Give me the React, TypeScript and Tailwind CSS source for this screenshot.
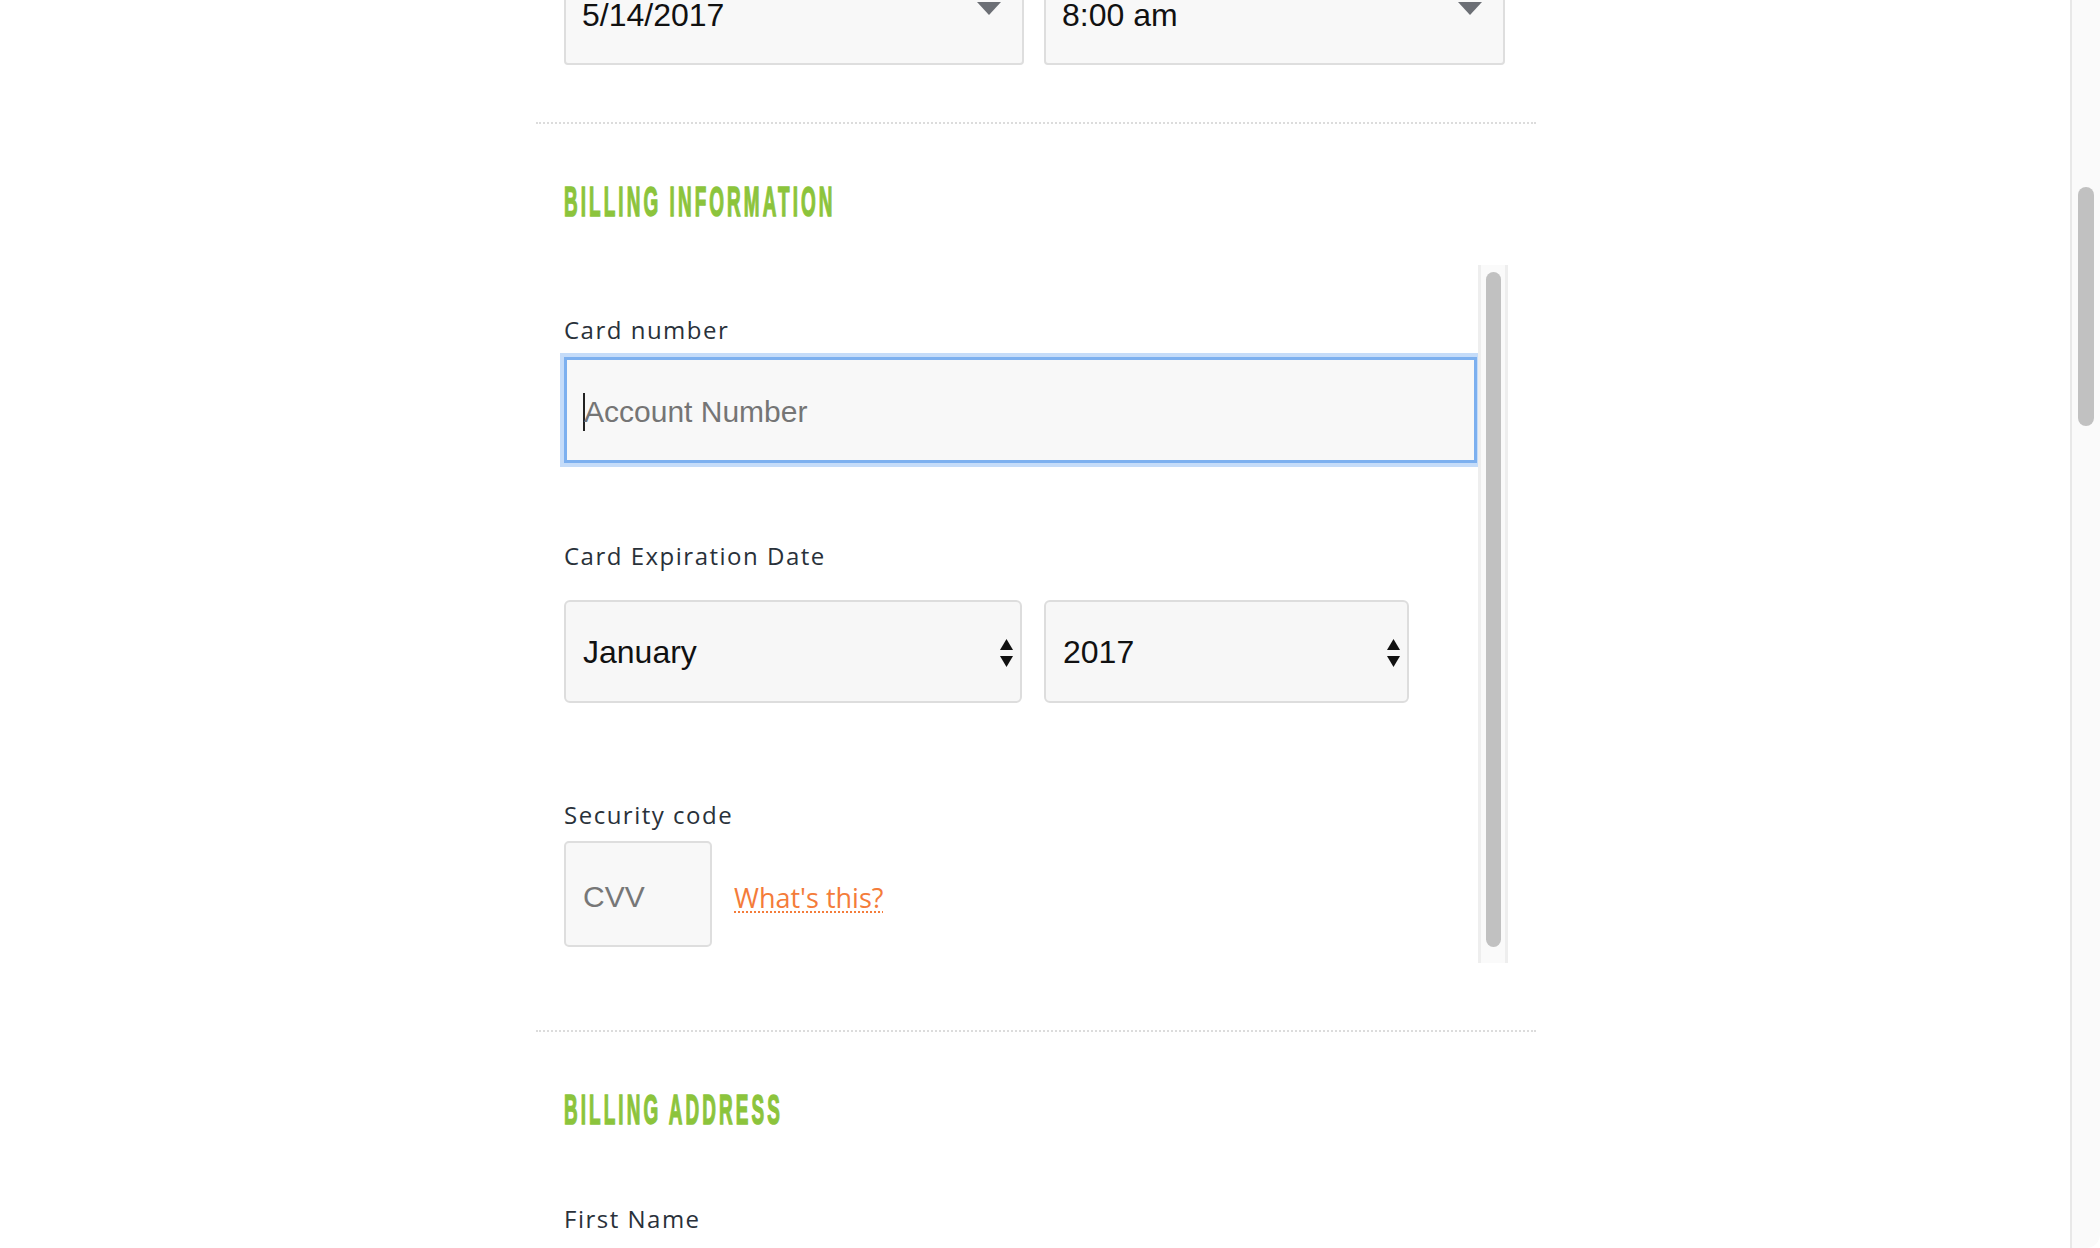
import type { ReactNode } from "react";

const label = "font-['Open_Sans',sans-serif] text-[24px] leading-[32px] tracking-[1.5px] text-[#29313a]";
const field = "font-['Liberation_Sans',Arial,sans-serif] leading-none";

function Label({ children, className = "" }: { children: ReactNode; className?: string }) {
  return <div className={`${label} ${className}`}>{children}</div>;
}

function Divider({ className = "" }: { className?: string }) {
  return <div className={`border-t-2 border-dotted border-[#dcdcdc] ${className}`} />;
}

function Heading({ children, className = "" }: { children: ReactNode; className?: string }) {
  return (
    <h2
      className={`ml-[28px] h-[43px] w-max origin-left scale-x-[0.44] font-['Liberation_Sans',Arial,sans-serif] text-[43px] font-bold uppercase leading-[43px] tracking-[7px] text-[#8cc43c] [-webkit-text-stroke:1.5px_#8cc43c] ${className}`}
    >
      {children}
    </h2>
  );
}

function TopSelect({ value, className = "" }: { value: string; className?: string }) {
  return (
    <div
      className={`flex h-[103px] items-center justify-between rounded-[4px] border-2 border-[#dedede] bg-[#f8f8f8] pl-[16px] pr-[21px] pt-[3px] ${className}`}
    >
      <span className={`${field} text-[32px] text-[#111]`}>{value}</span>
      <svg width="24" height="13" viewBox="0 0 24 13" className="mb-[14px]">
        <polygon points="0,0 24,0 12,13" fill="#6c6f75" />
      </svg>
    </div>
  );
}

function Select({ value, className = "" }: { value: string; className?: string }) {
  return (
    <div
      className={`flex h-[103px] items-center justify-between rounded-[6px] border-2 border-[#dddddd] bg-[#f7f7f7] pl-[17px] pr-[7px] ${className}`}
    >
      <span className={`${field} text-[32px] text-[#111]`}>{value}</span>
      <svg width="13" height="28" viewBox="0 0 13 28" className="mt-[2px]">
        <polygon points="6.5,0 13,11 0,11" fill="#111" />
        <polygon points="0,17 13,17 6.5,28" fill="#111" />
      </svg>
    </div>
  );
}

function PaymentFrame() {
  return (
    <div className="ml-[28px] mt-[42px] flex h-[698px] w-[944px]">
      <div className="flex-1 pt-[49px]">
        <Label>Card number</Label>
        <div className="mt-[11px] flex h-[106px] w-[913px] items-center border-[3px] border-[#7db0ef] bg-[#f8f8f8] pl-[16px] pt-[4px] shadow-[0_0_0_4px_#c5dcf9]">
          <span className="h-[38px] w-[2px] bg-[#222]" />
          <span className={`${field} -ml-[1px] text-[30px] text-[#757575]`}>Account Number</span>
        </div>

        <Label className="mt-[77px]">Card Expiration Date</Label>
        <div className="mt-[28px] flex gap-[22px]">
          <Select value="January" className="w-[458px]" />
          <Select value="2017" className="w-[365px]" />
        </div>

        <Label className="mt-[96px]">Security code</Label>
        <div className="mt-[10px] flex items-center">
          <div className="flex h-[106px] w-[148px] items-center rounded-[5px] border-2 border-[#dedede] bg-[#f8f8f8] pl-[17px] pt-[6px]">
            <span className={`${field} text-[30px] text-[#777]`}>CVV</span>
          </div>
          <a className="ml-[22px] mt-[6px] font-['Open_Sans',sans-serif] text-[27px] font-medium leading-none text-[#f47c3a] underline decoration-[#f47c3a] decoration-dotted decoration-2 underline-offset-[4px]">
            What's this?
          </a>
        </div>
      </div>
      <div className="w-[30px] border-x-[3px] border-[#eeeeee] bg-[#fafafa] pl-[5px] pt-[7px]">
        <div className="h-[675px] w-[15px] rounded-full bg-[#c1c1c1]" />
      </div>
    </div>
  );
}

export default function App() {
  return (
    <div className="flex h-[1248px] w-[2100px] overflow-hidden bg-white">
      <div className="flex-1 overflow-hidden">
        <div className="ml-[536px] w-[1000px]">
          <div className="-mt-[38px] flex gap-[20px] pl-[28px]">
            <TopSelect value="5/14/2017" className="w-[460px]" />
            <TopSelect value="8:00 am" className="w-[461px]" />
          </div>

          <Divider className="mt-[57px]" />
          <Heading className="mt-[56px]">Billing Information</Heading>

          <PaymentFrame />

          <Divider className="mt-[67px]" />
          <Heading className="mt-[56px]">Billing Address</Heading>
          <Label className="mt-[72px] pl-[28px]">First Name</Label>
        </div>
      </div>

      <div className="h-full w-[30px] rounded-br-[14px] border-l-2 border-[#e8e8e8] bg-[#fafafa] pl-[6px] pt-[187px]">
        <div className="h-[239px] w-[16px] rounded-full bg-[#c1c1c1]" />
      </div>
    </div>
  );
}
